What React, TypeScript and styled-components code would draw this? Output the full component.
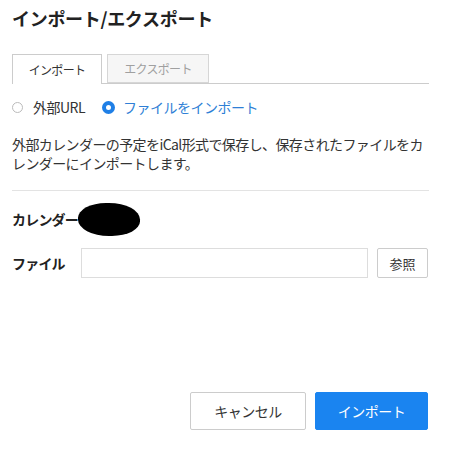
import React from "react";
import styled, { createGlobalStyle } from "styled-components";

const Global = createGlobalStyle`
  html, body { margin: 0; padding: 0; background: #fff; }
  body { font-family: "Noto Sans CJK JP", "Noto Sans", sans-serif; color: #333; }
  * { box-sizing: border-box; }
`;

const Page = styled.div`
  width: 470px;
  height: 472px;
  padding: 6px 41px 0 12px;
  display: flex;
  flex-direction: column;
`;

const Title = styled.h1`
  margin: 0;
  font-size: 18px;
  line-height: 24px;
  font-weight: 700;
  color: #222;
  letter-spacing: -0.3px;
`;

const TabBar = styled.div`
  margin-top: 24px;
  display: flex;
  gap: 5px;
  border-bottom: 1px solid #ccc;
  height: 30px;
`;

const Tab = styled.div<{ $active?: boolean }>`
  width: ${(p) => (p.$active ? 90 : 102)}px;
  height: ${(p) => (p.$active ? 30 : 29)}px;
  border: 1px solid ${(p) => (p.$active ? "#ccc" : "#d6d6d6")};
  border-bottom: ${(p) => (p.$active ? "none" : "1px solid #d6d6d6")};
  background: ${(p) => (p.$active ? "#fff" : "#f6f6f6")};
  color: ${(p) => (p.$active ? "#333" : "#a0a0a0")};
  font-size: 12px;
  display: flex;
  align-items: center;
  justify-content: center;
  letter-spacing: -0.7px;
`;

const RadioRow = styled.div`
  margin-top: 13px;
  display: flex;
  align-items: center;
  height: 20px;
  font-size: 14px;
`;

const RadioItem = styled.label<{ $checked?: boolean }>`
  display: flex;
  align-items: center;
  gap: ${(p) => (p.$checked ? 8 : 10)}px;
  margin-right: 17px;
  color: ${(p) => (p.$checked ? "#2f7fd6" : "#333")};
  letter-spacing: -0.5px;
`;

const RadioDot = styled.span<{ $checked?: boolean }>`
  display: inline-block;
  width: ${(p) => (p.$checked ? 13 : 11)}px;
  height: ${(p) => (p.$checked ? 13 : 11)}px;
  border-radius: 50%;
  border: ${(p) => (p.$checked ? "4px solid #1f7fe6" : "1px solid #bbb")};
  background: #fff;
`;

const Description = styled.p`
  margin: 18px 0 0;
  font-size: 14px;
  line-height: 19px;
  letter-spacing: -0.6px;
  color: #333;
`;

const Divider = styled.hr`
  margin: 17px 0 0;
  border: none;
  border-top: 1px solid #e3e3e3;
  height: 0;
`;

const FieldRow = styled.div<{ $top: number }>`
  margin-top: ${(p) => p.$top}px;
  display: flex;
  align-items: center;
  height: 30px;
`;

const Label = styled.span`
  font-size: 14px;
  font-weight: 700;
  color: #222;
  width: 69px;
  flex: none;
  letter-spacing: -0.8px;
`;

const CalendarLabel = styled(Label)`
  width: auto;
`;

const Redaction = styled.span`
  display: inline-block;
  width: 62px;
  height: 33px;
  background: #000;
  border-radius: 45% 50% 45% 50%;
  margin-left: 0;
`;

const FileInput = styled.div`
  width: 287px;
  height: 30px;
  border: 1px solid #ddd;
  background: #fff;
`;

const BrowseButton = styled.div`
  margin-left: 9px;
  width: 51px;
  height: 30px;
  border: 1px solid #ccc;
  border-radius: 2px;
  display: flex;
  align-items: center;
  justify-content: center;
  font-size: 13px;
  color: #333;
`;

const Footer = styled.div`
  margin-top: auto;
  margin-bottom: 42px;
  display: flex;
  justify-content: flex-end;
  gap: 9px;
  padding-right: 1px;
`;

const Button = styled.div<{ $primary?: boolean }>`
  width: ${(p) => (p.$primary ? 113 : 116)}px;
  height: 38px;
  border-radius: 2px;
  border: 1px solid ${(p) => (p.$primary ? "#1a84f0" : "#ccc")};
  background: ${(p) => (p.$primary ? "#1a84f0" : "#fff")};
  color: ${(p) => (p.$primary ? "#fff" : "#333")};
  font-size: 14px;
  display: flex;
  align-items: center;
  justify-content: center;
  letter-spacing: -0.5px;
`;

export default function App() {
  return (
    <>
      <Global />
      <Page>
        <Title>インポート/エクスポート</Title>
        <TabBar>
          <Tab $active>インポート</Tab>
          <Tab>エクスポート</Tab>
        </TabBar>
        <RadioRow>
          <RadioItem>
            <RadioDot />
            外部URL
          </RadioItem>
          <RadioItem $checked>
            <RadioDot $checked />
            ファイルをインポート
          </RadioItem>
        </RadioRow>
        <Description>
          外部カレンダーの予定をiCal形式で保存し、保存されたファイルをカレンダーにインポートします。
        </Description>
        <Divider />
        <FieldRow $top={13}>
          <CalendarLabel>カレンダー</CalendarLabel>
          <Redaction />
        </FieldRow>
        <FieldRow $top={14}>
          <Label>ファイル</Label>
          <FileInput />
          <BrowseButton>参照</BrowseButton>
        </FieldRow>
        <Footer>
          <Button>キャンセル</Button>
          <Button $primary>インポート</Button>
        </Footer>
      </Page>
    </>
  );
}
